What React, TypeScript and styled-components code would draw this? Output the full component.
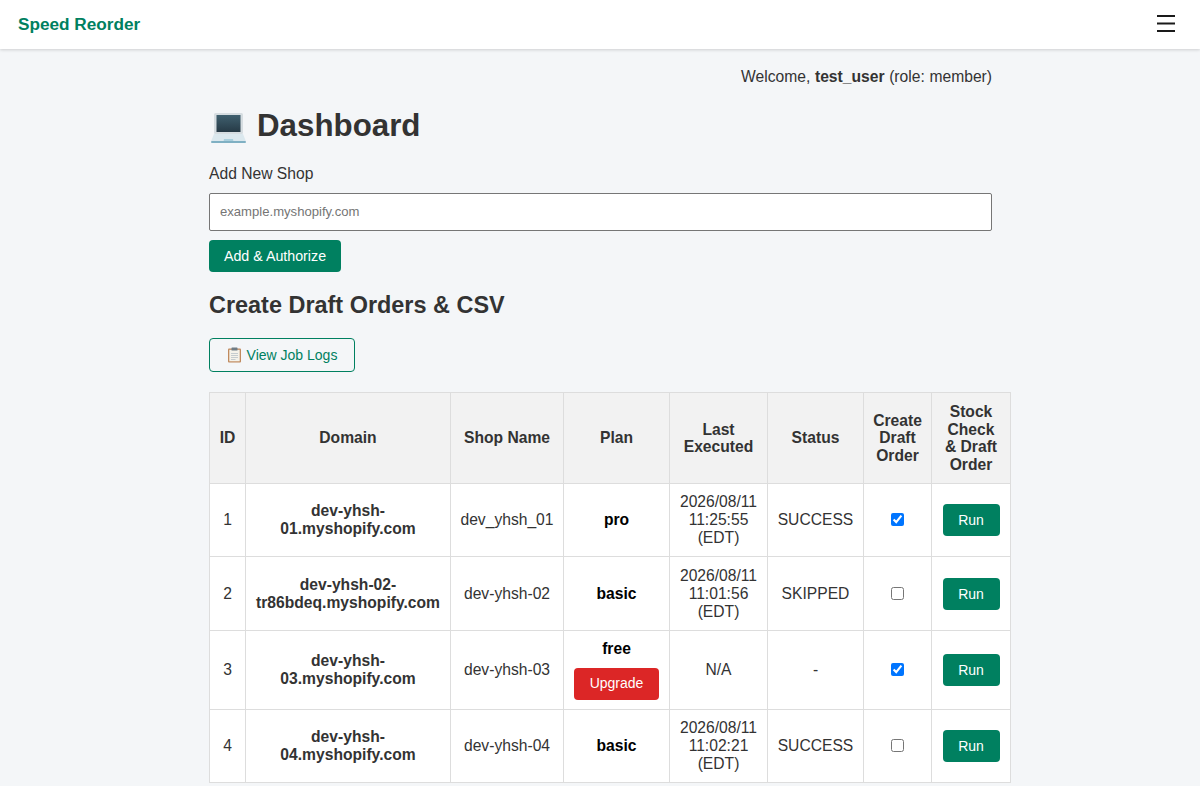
import React from 'react';
import styled, { createGlobalStyle } from 'styled-components';

const GlobalStyle = createGlobalStyle`
  html, body {
    margin: 0;
    padding: 0;
    background: #f4f6f8;
    color: #333;
    font-family: "Liberation Sans", Arial, sans-serif;
    font-size: 15.65px;
    overflow-x: hidden;
  }
`;

const Header = styled.header`
  height: 49px;
  background: #fff;
  box-shadow: 0 1px 3px rgba(0, 0, 0, 0.16);
  display: flex;
  align-items: center;
  justify-content: space-between;
  padding: 0 23px 0 18px;
`;

const Brand = styled.div`
  color: #008060;
  font-size: 17.2px;
  font-weight: 700;
`;

const MenuButton = styled.button`
  background: none;
  border: none;
  padding: 0;
  margin-bottom: 2px;
  width: 20px;
  height: 20px;
  display: flex;
  align-items: center;
`;

const Main = styled.main`
  width: 783px;
  margin: 0 208px 0 209px;
  padding-top: 19px;
`;

const Welcome = styled.p`
  margin: 0;
  text-align: right;
  line-height: 18px;
  word-spacing: 0.3px;
`;

const Title = styled.h1`
  margin: 21px 0 0;
  display: flex;
  align-items: center;
  gap: 11px;
  font-size: 31.3px;
  line-height: 37px;
  font-weight: 700;
  color: #333;
`;

const FieldLabel = styled.label`
  display: block;
  margin-top: 21px;
  line-height: 18px;
`;

const ShopInput = styled.input`
  display: block;
  box-sizing: border-box;
  width: 100%;
  height: 38px;
  margin-top: 10px;
  padding: 0 10px 1px;
  background: #fff;
  border: 1px solid #767676;
  border-radius: 2px;
  font: 13.1px "Liberation Sans", Arial, sans-serif;
  &::placeholder {
    color: #757575;
  }
`;

const Button = styled.button<{ $tone?: 'green' | 'red' }>`
  border: none;
  border-radius: 4px;
  background: ${(p) => (p.$tone === 'red' ? '#dc2626' : '#008060')};
  color: #fff;
  font: 14px "Liberation Sans", Arial, sans-serif;
  height: 32px;
`;

const AddButton = styled(Button)`
  display: block;
  width: 132px;
  margin-top: 9px;
  font-size: 14.25px;
`;

const SectionTitle = styled.h2`
  margin: 19px 0 0;
  font-size: 23.45px;
  line-height: 28px;
  font-weight: 700;
  color: #333;
`;

const LogsButton = styled.button`
  display: flex;
  align-items: center;
  justify-content: center;
  gap: 5px;
  box-sizing: border-box;
  width: 146px;
  height: 34px;
  margin-top: 19px;
  padding: 0 0 1px;
  background: transparent;
  border: 1px solid #008060;
  border-radius: 4px;
  color: #008060;
  font: 14px "Liberation Sans", Arial, sans-serif;
`;

const Table = styled.table`
  width: 801px;
  margin-top: 20px;
  border-collapse: collapse;
  table-layout: fixed;
  background: #fff;
`;

const Th = styled.th`
  padding: 0 2px;
  background: #f2f2f2;
  border: 1px solid #ddd;
  line-height: 17.5px;
  font-weight: 700;
  color: #333;
  height: 90px;
`;

const Td = styled.td<{ $strong?: boolean; $black?: boolean }>`
  padding: 0 2px;
  border: 1px solid #ddd;
  text-align: center;
  line-height: 18px;
  font-weight: ${(p) => (p.$strong ? 700 : 400)};
  color: ${(p) => (p.$black ? '#000' : '#333')};
`;

const Row = styled.tr<{ $height: number }>`
  height: ${(p) => p.$height}px;
`;

const PlanName = styled.div`
  margin-bottom: 10px;
`;

const UpgradeButton = styled(Button)`
  width: 85px;
  display: block;
  margin: 0 auto;
  padding-bottom: 3px;
`;

const RunButton = styled(Button)`
  width: 57px;
`;

const DraftCheckbox = styled.input`
  margin: 3px;
`;

const LaptopFrame = styled.svg`
  margin-left: 2px;
  margin-top: 6px;
`;

const LaptopIcon = () => (
  <LaptopFrame width="35" height="31" viewBox="0 0 35 31">
    <defs>
      <linearGradient id="screen" x1="0" y1="0" x2="0" y2="1">
        <stop offset="0" stopColor="#40606f" />
        <stop offset="1" stopColor="#263a46" />
      </linearGradient>
    </defs>
    <rect x="3" y="0" width="29" height="21" rx="1.5" fill="#d6dde1" />
    <rect x="5.5" y="2" width="24" height="17" fill="url(#screen)" />
    <path d="M3 21h29l3 7.5H0z" fill="#dbe8ee" />
    <path d="M13 26h9l.5 2.5h-10z" fill="#a9cfdd" />
    <rect x="0" y="28" width="35" height="2" rx="1" fill="#7fb0c3" />
  </LaptopFrame>
);

const ClipboardIcon = () => (
  <svg width="15" height="16" viewBox="0 0 15 16">
    <rect x="1" y="1.5" width="13" height="14" rx="1" fill="#c08a5e" />
    <rect x="2.3" y="2.8" width="10.4" height="11.5" fill="#f4f2ea" />
    <rect x="4.5" y="0.5" width="6" height="3" rx="0.6" fill="#6f7c85" />
    <path d="M4 6.5h7M4 8.5h7M4 10.5h7M4 12.5h4.5" stroke="#b9c2c8" strokeWidth="0.8" />
  </svg>
);

const MenuIcon = () => (
  <svg width="18" height="17" viewBox="0 0 18 17">
    <path d="M0 1h18M0 8.5h18M0 16h18" stroke="#1a1a1a" strokeWidth="2" />
  </svg>
);

const columns = [36, 205, 113, 106, 98, 96, 68, 79];

const shops = [
  { id: 1, domain: ['dev-yhsh-', '01.myshopify.com'], name: 'dev_yhsh_01', plan: 'pro', time: ['2026/08/11', '11:25:55', '(EDT)'], status: 'SUCCESS', draft: true, height: 73 },
  { id: 2, domain: ['dev-yhsh-02-', 'tr86bdeq.myshopify.com'], name: 'dev-yhsh-02', plan: 'basic', time: ['2026/08/11', '11:01:56', '(EDT)'], status: 'SKIPPED', draft: false, height: 74 },
  { id: 3, domain: ['dev-yhsh-', '03.myshopify.com'], name: 'dev-yhsh-03', plan: 'free', time: ['N/A'], status: '-', draft: true, height: 79 },
  { id: 4, domain: ['dev-yhsh-', '04.myshopify.com'], name: 'dev-yhsh-04', plan: 'basic', time: ['2026/08/11', '11:02:21', '(EDT)'], status: 'SUCCESS', draft: false, height: 73 },
];

const Lines = ({ lines }: { lines: string[] }) => (
  <>
    {lines.map((line) => (
      <div key={line}>{line}</div>
    ))}
  </>
);

export default function App() {
  return (
    <>
      <GlobalStyle />
      <Header>
        <Brand>Speed Reorder</Brand>
        <MenuButton aria-label="Menu">
          <MenuIcon />
        </MenuButton>
      </Header>
      <Main>
        <Welcome>
          Welcome, <strong>test_user</strong> (role: member)
        </Welcome>
        <Title>
          <LaptopIcon />
          Dashboard
        </Title>
        <FieldLabel htmlFor="shop">Add New Shop</FieldLabel>
        <ShopInput id="shop" placeholder="example.myshopify.com" />
        <AddButton>Add &amp; Authorize</AddButton>
        <SectionTitle>Create Draft Orders &amp; CSV</SectionTitle>
        <LogsButton>
          <ClipboardIcon />
          View Job Logs
        </LogsButton>
        <Table>
          <colgroup>
            {columns.map((width, i) => (
              <col key={i} style={{ width }} />
            ))}
          </colgroup>
          <thead>
            <tr>
              <Th>ID</Th>
              <Th>Domain</Th>
              <Th>Shop Name</Th>
              <Th>Plan</Th>
              <Th>Last<br />Executed</Th>
              <Th>Status</Th>
              <Th>Create<br />Draft<br />Order</Th>
              <Th>Stock<br />Check<br />&amp; Draft<br />Order</Th>
            </tr>
          </thead>
          <tbody>
            {shops.map((shop) => (
              <Row key={shop.id} $height={shop.height}>
                <Td>{shop.id}</Td>
                <Td $strong><Lines lines={shop.domain} /></Td>
                <Td>{shop.name}</Td>
                <Td $strong $black>
                  {shop.plan === 'free' ? (
                    <>
                      <PlanName>free</PlanName>
                      <UpgradeButton $tone="red">Upgrade</UpgradeButton>
                    </>
                  ) : (
                    shop.plan
                  )}
                </Td>
                <Td><Lines lines={shop.time} /></Td>
                <Td>{shop.status}</Td>
                <Td><DraftCheckbox type="checkbox" defaultChecked={shop.draft} /></Td>
                <Td><RunButton>Run</RunButton></Td>
              </Row>
            ))}
          </tbody>
        </Table>
      </Main>
    </>
  );
}
